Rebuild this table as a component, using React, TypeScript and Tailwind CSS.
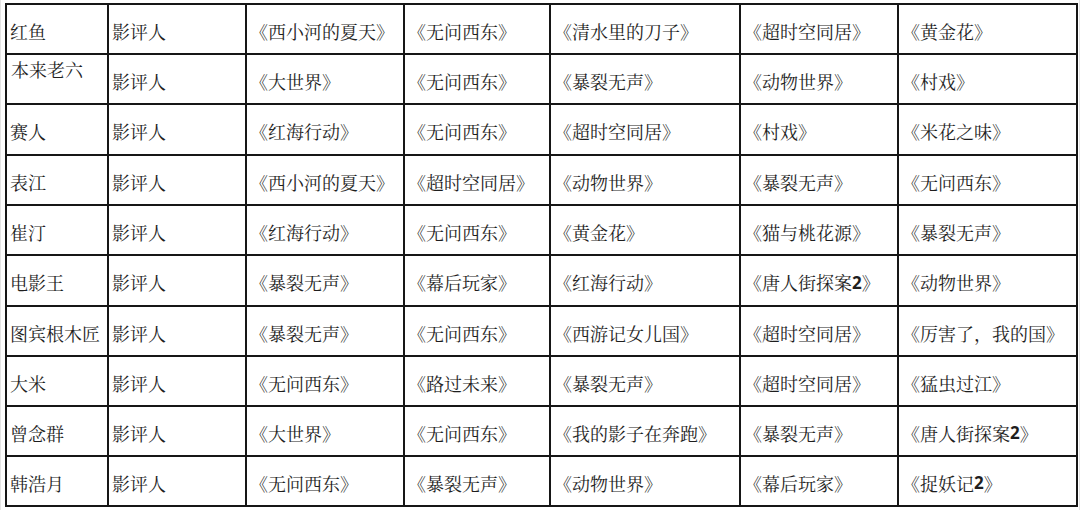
import React from "react";

const rows: string[][] = [
  ["红鱼", "影评人", "《西小河的夏天》", "《无问西东》", "《清水里的刀子》", "《超时空同居》", "《黄金花》"],
  ["本来老六", "影评人", "《大世界》", "《无问西东》", "《暴裂无声》", "《动物世界》", "《村戏》"],
  ["赛人", "影评人", "《红海行动》", "《无问西东》", "《超时空同居》", "《村戏》", "《米花之味》"],
  ["表江", "影评人", "《西小河的夏天》", "《超时空同居》", "《动物世界》", "《暴裂无声》", "《无问西东》"],
  ["崔汀", "影评人", "《红海行动》", "《无问西东》", "《黄金花》", "《猫与桃花源》", "《暴裂无声》"],
  ["电影王", "影评人", "《暴裂无声》", "《幕后玩家》", "《红海行动》", "《唐人街探案2》", "《动物世界》"],
  ["图宾根木匠", "影评人", "《暴裂无声》", "《无问西东》", "《西游记女儿国》", "《超时空同居》", "《厉害了，我的国》"],
  ["大米", "影评人", "《无问西东》", "《路过未来》", "《暴裂无声》", "《超时空同居》", "《猛虫过江》"],
  ["曾念群", "影评人", "《大世界》", "《无问西东》", "《我的影子在奔跑》", "《暴裂无声》", "《唐人街探案2》"],
  ["韩浩月", "影评人", "《无问西东》", "《暴裂无声》", "《动物世界》", "《幕后玩家》", "《捉妖记2》"],
];

function renderText(t: string) {
  const m = t.match(/^(.*?)(2)(》)$/);
  if (!m) return t;
  return (
    <>
      {m[1]}
      <span className="font-bold text-[17px]" style={{ fontFamily: '"Open Sans", "Liberation Sans", sans-serif' }}>
        2
      </span>
      {m[3]}
    </>
  );
}

export default function App() {
  return (
    <div className="w-[1080px] h-[510px] bg-white relative overflow-hidden">
      <div className="absolute left-0 top-0 bottom-0 w-px bg-[#e4e4e4]" />
      <div className="absolute right-0 top-0 bottom-0 w-px bg-[#e4e4e4]" />
      <div className="pl-[5px] pt-[3px]">
        <div
          className="inline-grid bg-[#161616] p-[2px] gap-[2px] grid-cols-[100px_136px_156px_144px_188px_156px_177px] grid-rows-[48px_48px_49px_48px_48px_49px_48px_48px_48px_48px] text-[18px] leading-none text-[#1e1e1e]"
          style={{ fontFamily: '"Noto Serif CJK SC", "Noto Sans CJK SC", sans-serif' }}
        >
          {rows.map((r, i) =>
            r.map((c, j) => {
              const special = i === 1 && j === 0;
              return (
                <div
                  key={`${i}-${j}`}
                  className={
                    special
                      ? "bg-white flex items-start pl-[4px] pt-[5px] whitespace-nowrap"
                      : "bg-white flex items-center pl-[3px] pt-[3px] whitespace-nowrap"
                  }
                >
                  {renderText(c)}
                </div>
              );
            })
          )}
        </div>
      </div>
    </div>
  );
}
